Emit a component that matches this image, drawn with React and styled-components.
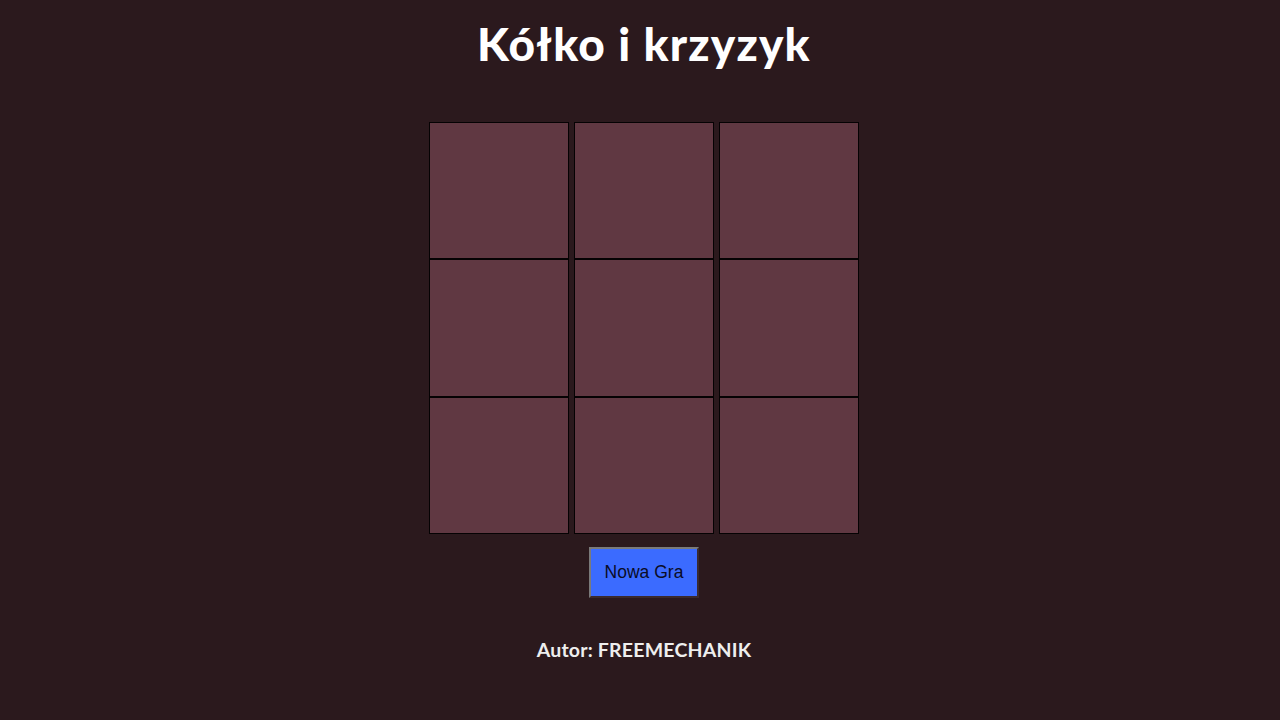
import React from "react";
import styled, { createGlobalStyle } from "styled-components";

const Global = createGlobalStyle`
  html, body { margin: 0; padding: 0; background: #2b191d; }
  body { font-family: "Lato", "Open Sans", sans-serif; }
`;

const Page = styled.div`
  width: 1280px;
  height: 720px;
  box-sizing: border-box;
  padding-left: 8px;
  display: flex;
  flex-direction: column;
  align-items: center;
  background: #2b191d;
`;

const Title = styled.h1`
  margin: 16px 0 0;
  height: 56px;
  line-height: 56px;
  font-family: "Lato", sans-serif;
  font-weight: 900;
  font-size: 46px;
  color: #ffffff;
  letter-spacing: 1.2px;
`;

const Board = styled.div`
  margin-top: 50px;
  display: grid;
  grid-template-columns: repeat(3, 140px);
  grid-auto-rows: 137.3px;
  column-gap: 5.3px;
`;

const Cell = styled.button`
  box-sizing: border-box;
  width: 140px;
  height: 137.3px;
  margin: 0;
  padding: 0;
  background: #603842;
  border: 1px solid #050203;
  cursor: pointer;
`;

const NewGame = styled.button`
  margin-top: 13px;
  box-sizing: border-box;
  width: 110px;
  height: 51px;
  background: #3b6bff;
  color: #0a0c26;
  font-family: "Liberation Sans", Arial, sans-serif;
  font-size: 17.5px;
  border-style: solid;
  border-width: 2px;
  border-color: #7a7a7a #3a2a2d #3a2a2d #7a7a7a;
  padding: 0;
  cursor: pointer;
`;

const Author = styled.p`
  margin: 40px 0 0;
  font-family: "Lato", sans-serif;
  font-weight: 700;
  font-size: 19.5px;
  letter-spacing: 0.2px;
  color: #eeeeee;
`;

export default function App() {
  return (
    <Page>
      <Global />
      <Title>Kółko i krzyzyk</Title>
      <Board>
        {Array.from({ length: 9 }).map((_, i) => (
          <Cell key={i} aria-label={`pole ${i + 1}`} />
        ))}
      </Board>
      <NewGame>Nowa Gra</NewGame>
      <Author>Autor: FREEMECHANIK</Author>
    </Page>
  );
}
